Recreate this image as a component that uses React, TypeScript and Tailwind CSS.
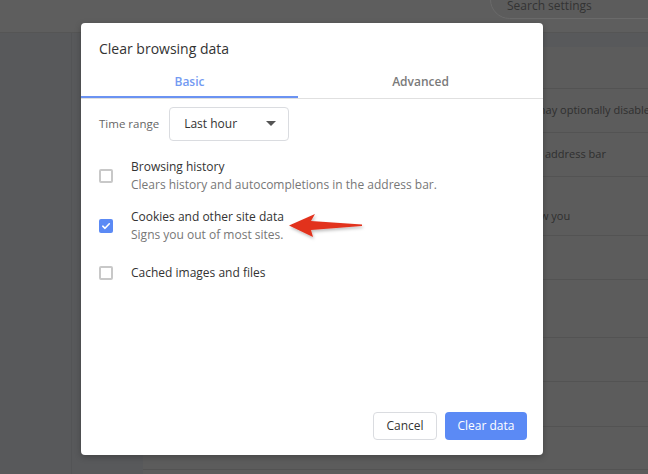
import React from "react";

const font = { fontFamily: '"Open Sans", "Noto Sans", sans-serif' };

function Checkbox({ checked }: { checked?: boolean }) {
  if (checked) {
    return (
      <div className="w-[14px] h-[14px] rounded-[2px] bg-[#5b8af5] flex items-center justify-center shrink-0">
        <svg width="10" height="10" viewBox="0 0 10 10">
          <path d="M1.8 5.2 L4 7.3 L8.3 2.8" fill="none" stroke="white" strokeWidth="1.6" strokeLinecap="round" strokeLinejoin="round" />
        </svg>
      </div>
    );
  }
  return <div className="w-[14px] h-[14px] rounded-[2px] border-2 border-[#c8c8c8] shrink-0" />;
}

function BgRow({ h, children }: { h: string; children?: React.ReactNode }) {
  return (
    <div className={`${h} border-b border-[#535353] flex items-center whitespace-nowrap text-[11px] text-[#2f2f2f]`}>
      {children}
    </div>
  );
}

export default function App() {
  return (
    <div className="relative w-[648px] h-[474px] overflow-hidden bg-[#58595b] flex flex-col" style={font}>
      {/* header */}
      <div className="h-[33px] bg-[#5e5e5e] border-b border-[#555] shrink-0 flex justify-end">
        <div className="mt-[-20px] ml-auto w-[200px] h-[39px] rounded-full border border-[#6a6a6a] bg-[#5c5c5c] flex items-end pl-[16px] pb-[5px] leading-[14px] text-[12px] text-[#333]" style={{ marginRight: "-42px" }}>
          Search settings
        </div>
      </div>
      {/* body */}
      <div className="flex flex-1">
        <div className="w-[72px] border-r border-[#535456] shrink-0" />
        <div className="w-[71px] shrink-0" />
        <div className="flex-1 mt-[14px] bg-[#5c5c5c] flex flex-col">
          <div className="h-[42px] border-b border-[#535353]" />
          <BgRow h="h-[44px]"><span className="pl-[370px]">You may optionally disable</span></BgRow>
          <BgRow h="h-[44px]"><span className="pl-[338px]">typed in the address bar</span></BgRow>
          <BgRow h="h-[59px]"><span className="pl-[361px] pt-[20px]">to follow you</span></BgRow>
          <BgRow h="h-[44px]" />
          <BgRow h="h-[58px]" />
          <BgRow h="h-[44px]" />
          <BgRow h="h-[45px]" />
          <BgRow h="h-[43px]" />
        </div>
      </div>

      {/* dialog */}
      <div className="absolute left-[81px] top-[23px] w-[462px] h-[432px] bg-white rounded-[4px] shadow-[0_2px_6px_rgba(0,0,0,0.25)] flex flex-col">
        <div className="pl-[18px] pt-[16px] h-[40px] text-[14px] text-[#333] leading-[20px]">Clear browsing data</div>
        <div className="flex h-[36px] border-b border-[#e0e0e0]">
          <div className="w-[217px] flex items-center justify-center border-b-2 border-[#6b93f2] text-[12px] font-semibold text-[#739af2] pt-[4px]">Basic</div>
          <div className="flex-1 flex items-center justify-center text-[12px] font-semibold text-[#7a7a7a] pt-[2px]">Advanced</div>
        </div>
        <div className="flex flex-col px-[18px] flex-1">
          <div className="flex items-center mt-[8px] gap-[10px]">
            <span className="text-[11.5px] text-[#666]">Time range</span>
            <div className="w-[120px] h-[34px] border border-[#dadce0] rounded-[4px] flex items-center pl-[14px] pr-[12px] text-[12px] text-[#333]">
              <span className="flex-1">Last hour</span>
              <svg width="10" height="6" viewBox="0 0 10 6"><path d="M0 0 L10 0 L5 5 Z" fill="#555" /></svg>
            </div>
          </div>
          <div className="flex items-center mt-[17px] gap-[18px]">
            <Checkbox />
            <div className="flex flex-col leading-[18px] text-[12px]">
              <span className="text-[#333]">Browsing history</span>
              <span className="text-[#777]">Clears history and autocompletions in the address bar.</span>
            </div>
          </div>
          <div className="flex items-center mt-[14px] gap-[18px]">
            <Checkbox checked />
            <div className="flex flex-col leading-[18px] text-[12px]">
              <span className="text-[#333]">Cookies and other site data</span>
              <span className="text-[#777]">Signs you out of most sites.</span>
            </div>
          </div>
          <div className="flex items-center mt-[20px] gap-[18px]">
            <Checkbox />
            <span className="text-[12px] leading-[18px] text-[#333]">Cached images and files</span>
          </div>
        </div>
        <div className="flex justify-end gap-[8px] pr-[16px] pb-[15px]">
          <button className="w-[64px] h-[28px] rounded-[4px] border border-[#dadce0] bg-white text-[12px] text-[#333]">Cancel</button>
          <button className="w-[82px] h-[28px] rounded-[4px] bg-[#5b8af5] text-[12px] text-white">Clear data</button>
        </div>
      </div>

      {/* red arrow */}
      <svg className="absolute left-[284px] top-[208px]" width="84" height="34" viewBox="284 208 84 34">
        <defs>
          <filter id="sh" x="-20%" y="-50%" width="140%" height="200%">
            <feDropShadow dx="1" dy="2" stdDeviation="1.5" floodColor="#000" floodOpacity="0.25" />
          </filter>
        </defs>
        <path d="M289 225.5 L315 214 L311 221 L362 224.5 L362 226 L311 230 L313 237 Z" fill="#e2321f" filter="url(#sh)" />
      </svg>
    </div>
  );
}
